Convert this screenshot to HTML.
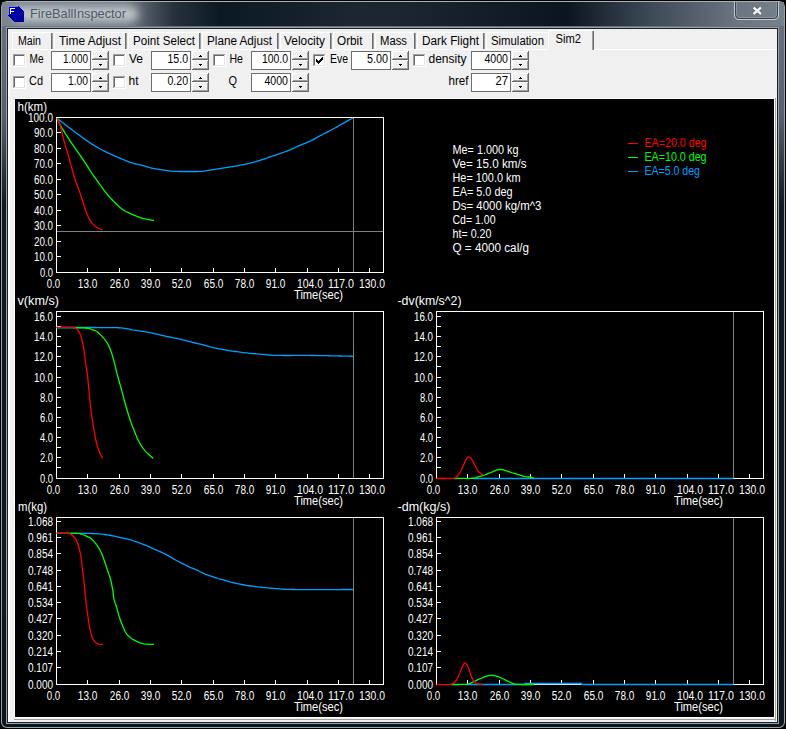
<!DOCTYPE html>
<html><head><meta charset="utf-8"><style>
html,body{margin:0;padding:0;background:#000;width:786px;height:729px;overflow:hidden}
svg{display:block}
text{font-family:"Liberation Sans",sans-serif}
</style></head><body>
<svg width="786" height="729" viewBox="0 0 786 729" shape-rendering="crispEdges">
<defs>
<linearGradient id="tb" x1="0" y1="0" x2="786" y2="0" gradientUnits="userSpaceOnUse">
<stop offset="0" stop-color="#7b8590"/>
<stop offset="0.16" stop-color="#737d88"/>
<stop offset="0.19" stop-color="#4a5560"/>
<stop offset="0.22" stop-color="#27323d"/>
<stop offset="0.28" stop-color="#0c1822"/>
<stop offset="0.45" stop-color="#1b2631"/>
<stop offset="0.52" stop-color="#1a2530"/>
<stop offset="0.72" stop-color="#0b1520"/>
<stop offset="0.82" stop-color="#3a4652"/>
<stop offset="0.94" stop-color="#6c7682"/>
<stop offset="1" stop-color="#77818c"/>
</linearGradient>
<linearGradient id="side" x1="0" y1="0" x2="0" y2="729" gradientUnits="userSpaceOnUse">
<stop offset="0" stop-color="#6c7682"/>
<stop offset="0.16" stop-color="#56606c"/>
<stop offset="0.28" stop-color="#0f1a24"/>
<stop offset="1" stop-color="#0c1620"/>
</linearGradient>
<filter id="blur6" x="-50%" y="-50%" width="200%" height="200%"><feGaussianBlur stdDeviation="5"/></filter>
<linearGradient id="closeg" x1="0" y1="0" x2="0" y2="20" gradientUnits="userSpaceOnUse">
<stop offset="0" stop-color="#7f8994"/>
<stop offset="1" stop-color="#66707b"/>
</linearGradient>
</defs>
<rect x="0" y="0" width="786" height="729" fill="#000" />
<rect x="1" y="1" width="784" height="727" rx="6" fill="#9aa3ac" shape-rendering="auto"/>
<rect x="2" y="2" width="782" height="725" rx="5" fill="url(#side)" shape-rendering="auto"/>
<rect x="2" y="2" width="782" height="24" fill="url(#tb)" />
<rect x="14" y="7" width="124" height="14" rx="6" fill="#c4cacf" filter="url(#blur6)" shape-rendering="auto"/>
<rect x="6" y="27" width="773" height="697" fill="#98a0a8" />
<rect x="7" y="28" width="771" height="695" fill="#1a2028" />
<rect x="8" y="29" width="769" height="693" fill="#f0f0f0" />
<path d="M8,6 H18 L24,12 V22 H14 L8,16 Z" fill="#0000a0"/>
<path d="M8.5,6.5 H17.5" stroke="#8080ff" stroke-width="1"/>
<path d="M8.5,6 V15" stroke="#8080ff" stroke-width="1"/>
<path d="M10.5,14 V8.5 H15 M10.5,11 H14" stroke="#ffffff" stroke-width="1" fill="none"/>
<text x="30" y="18" font-size="13" fill="#4d5a68" text-anchor="start" textLength="96" lengthAdjust="spacingAndGlyphs" >FireBallInspector</text>
<path d="M734.5,1 V15 Q734.5,19.5 739,19.5 H774 Q778.5,19.5 778.5,15 V1" fill="none" stroke="#c4cad0" stroke-width="1" shape-rendering="auto"/>
<path d="M735.5,1 V14.5 Q735.5,18.5 739.5,18.5 H773.5 Q777.5,18.5 777.5,14.5 V1" fill="none" stroke="#3a4048" stroke-width="1" shape-rendering="auto"/>
<path d="M736.5,2 V14 Q736.5,17.5 740,17.5 H773 Q776.5,17.5 776.5,14 V2" fill="none" stroke="#8a939c" stroke-width="1" shape-rendering="auto"/>
<rect x="6" y="1" width="774" height="1" fill="#a8b0b8" />
<path d="M753.5,7.5 L761,14 M761,7.5 L753.5,14" stroke="#40464c" stroke-width="3.6" shape-rendering="auto"/>
<path d="M753.5,7.5 L761,14 M761,7.5 L753.5,14" stroke="#f4f4f4" stroke-width="2.4" shape-rendering="auto"/>
<rect x="8" y="49" width="769" height="1" fill="#ffffff" />
<rect x="8" y="49" width="2" height="673" fill="#ffffff" />
<rect x="12" y="32" width="40" height="1" fill="#ffffff" />
<rect x="12" y="32" width="1" height="17" fill="#ffffff" />
<rect x="51" y="33" width="1" height="16" fill="#696969" />
<rect x="52" y="33" width="1" height="16" fill="#a0a0a0" />
<rect x="54" y="32" width="72" height="1" fill="#ffffff" />
<rect x="54" y="32" width="1" height="17" fill="#ffffff" />
<rect x="125" y="33" width="1" height="16" fill="#696969" />
<rect x="126" y="33" width="1" height="16" fill="#a0a0a0" />
<rect x="128" y="32" width="72" height="1" fill="#ffffff" />
<rect x="128" y="32" width="1" height="17" fill="#ffffff" />
<rect x="199" y="33" width="1" height="16" fill="#696969" />
<rect x="200" y="33" width="1" height="16" fill="#a0a0a0" />
<rect x="202" y="32" width="76" height="1" fill="#ffffff" />
<rect x="202" y="32" width="1" height="17" fill="#ffffff" />
<rect x="277" y="33" width="1" height="16" fill="#696969" />
<rect x="278" y="33" width="1" height="16" fill="#a0a0a0" />
<rect x="280" y="32" width="51" height="1" fill="#ffffff" />
<rect x="280" y="32" width="1" height="17" fill="#ffffff" />
<rect x="330" y="33" width="1" height="16" fill="#696969" />
<rect x="331" y="33" width="1" height="16" fill="#a0a0a0" />
<rect x="333" y="32" width="40" height="1" fill="#ffffff" />
<rect x="333" y="32" width="1" height="17" fill="#ffffff" />
<rect x="372" y="33" width="1" height="16" fill="#696969" />
<rect x="373" y="33" width="1" height="16" fill="#a0a0a0" />
<rect x="375" y="32" width="40" height="1" fill="#ffffff" />
<rect x="375" y="32" width="1" height="17" fill="#ffffff" />
<rect x="414" y="33" width="1" height="16" fill="#696969" />
<rect x="415" y="33" width="1" height="16" fill="#a0a0a0" />
<rect x="417" y="32" width="67" height="1" fill="#ffffff" />
<rect x="417" y="32" width="1" height="17" fill="#ffffff" />
<rect x="483" y="33" width="1" height="16" fill="#696969" />
<rect x="484" y="33" width="1" height="16" fill="#a0a0a0" />
<rect x="486" y="32" width="63" height="1" fill="#ffffff" />
<rect x="486" y="32" width="1" height="17" fill="#ffffff" />
<rect x="548" y="33" width="1" height="16" fill="#696969" />
<rect x="549" y="33" width="1" height="16" fill="#a0a0a0" />
<rect x="547" y="30" width="47" height="21" fill="#f0f0f0" />
<rect x="548" y="30" width="45" height="1" fill="#ffffff" />
<rect x="548" y="30" width="1" height="20" fill="#ffffff" />
<rect x="592" y="31" width="1" height="19" fill="#a0a0a0" />
<rect x="593" y="31" width="1" height="19" fill="#696969" />
<rect x="13" y="54" width="13" height="13" fill="#ffffff" />
<rect x="13" y="54" width="12" height="1" fill="#a0a0a0" />
<rect x="13" y="54" width="1" height="12" fill="#a0a0a0" />
<rect x="14" y="55" width="10" height="1" fill="#696969" />
<rect x="14" y="55" width="1" height="10" fill="#696969" />
<rect x="14" y="65" width="11" height="1" fill="#e3e3e3" />
<rect x="24" y="55" width="1" height="11" fill="#e3e3e3" />
<rect x="51" y="51" width="40" height="19" fill="#ffffff" />
<rect x="51.5" y="51.5" width="39" height="18" fill="none" stroke="#6e6e6e" stroke-width="1"/>
<rect x="92" y="51" width="17" height="9" fill="#f0f0f0" />
<rect x="92" y="51" width="16" height="1" fill="#ffffff" />
<rect x="92" y="51" width="1" height="8" fill="#ffffff" />
<rect x="92" y="59" width="17" height="1" fill="#696969" />
<rect x="108" y="51" width="1" height="9" fill="#696969" />
<rect x="93" y="58" width="15" height="1" fill="#a0a0a0" />
<rect x="107" y="52" width="1" height="7" fill="#a0a0a0" />
<rect x="100" y="55" width="1" height="1" fill="#000" />
<rect x="99" y="56" width="3" height="1" fill="#000" />
<rect x="92" y="60" width="17" height="10" fill="#f0f0f0" />
<rect x="92" y="60" width="16" height="1" fill="#ffffff" />
<rect x="92" y="60" width="1" height="9" fill="#ffffff" />
<rect x="92" y="69" width="17" height="1" fill="#696969" />
<rect x="108" y="60" width="1" height="10" fill="#696969" />
<rect x="93" y="68" width="15" height="1" fill="#a0a0a0" />
<rect x="107" y="61" width="1" height="8" fill="#a0a0a0" />
<rect x="99" y="64" width="3" height="1" fill="#000" />
<rect x="100" y="65" width="1" height="1" fill="#000" />
<rect x="13" y="76" width="13" height="13" fill="#ffffff" />
<rect x="13" y="76" width="12" height="1" fill="#a0a0a0" />
<rect x="13" y="76" width="1" height="12" fill="#a0a0a0" />
<rect x="14" y="77" width="10" height="1" fill="#696969" />
<rect x="14" y="77" width="1" height="10" fill="#696969" />
<rect x="14" y="87" width="11" height="1" fill="#e3e3e3" />
<rect x="24" y="77" width="1" height="11" fill="#e3e3e3" />
<rect x="51" y="73" width="40" height="19" fill="#ffffff" />
<rect x="51.5" y="73.5" width="39" height="18" fill="none" stroke="#6e6e6e" stroke-width="1"/>
<rect x="92" y="73" width="17" height="9" fill="#f0f0f0" />
<rect x="92" y="73" width="16" height="1" fill="#ffffff" />
<rect x="92" y="73" width="1" height="8" fill="#ffffff" />
<rect x="92" y="81" width="17" height="1" fill="#696969" />
<rect x="108" y="73" width="1" height="9" fill="#696969" />
<rect x="93" y="80" width="15" height="1" fill="#a0a0a0" />
<rect x="107" y="74" width="1" height="7" fill="#a0a0a0" />
<rect x="100" y="77" width="1" height="1" fill="#000" />
<rect x="99" y="78" width="3" height="1" fill="#000" />
<rect x="92" y="82" width="17" height="10" fill="#f0f0f0" />
<rect x="92" y="82" width="16" height="1" fill="#ffffff" />
<rect x="92" y="82" width="1" height="9" fill="#ffffff" />
<rect x="92" y="91" width="17" height="1" fill="#696969" />
<rect x="108" y="82" width="1" height="10" fill="#696969" />
<rect x="93" y="90" width="15" height="1" fill="#a0a0a0" />
<rect x="107" y="83" width="1" height="8" fill="#a0a0a0" />
<rect x="99" y="86" width="3" height="1" fill="#000" />
<rect x="100" y="87" width="1" height="1" fill="#000" />
<rect x="113" y="54" width="13" height="13" fill="#ffffff" />
<rect x="113" y="54" width="12" height="1" fill="#a0a0a0" />
<rect x="113" y="54" width="1" height="12" fill="#a0a0a0" />
<rect x="114" y="55" width="10" height="1" fill="#696969" />
<rect x="114" y="55" width="1" height="10" fill="#696969" />
<rect x="114" y="65" width="11" height="1" fill="#e3e3e3" />
<rect x="124" y="55" width="1" height="11" fill="#e3e3e3" />
<rect x="151" y="51" width="40" height="19" fill="#ffffff" />
<rect x="151.5" y="51.5" width="39" height="18" fill="none" stroke="#6e6e6e" stroke-width="1"/>
<rect x="192" y="51" width="17" height="9" fill="#f0f0f0" />
<rect x="192" y="51" width="16" height="1" fill="#ffffff" />
<rect x="192" y="51" width="1" height="8" fill="#ffffff" />
<rect x="192" y="59" width="17" height="1" fill="#696969" />
<rect x="208" y="51" width="1" height="9" fill="#696969" />
<rect x="193" y="58" width="15" height="1" fill="#a0a0a0" />
<rect x="207" y="52" width="1" height="7" fill="#a0a0a0" />
<rect x="200" y="55" width="1" height="1" fill="#000" />
<rect x="199" y="56" width="3" height="1" fill="#000" />
<rect x="192" y="60" width="17" height="10" fill="#f0f0f0" />
<rect x="192" y="60" width="16" height="1" fill="#ffffff" />
<rect x="192" y="60" width="1" height="9" fill="#ffffff" />
<rect x="192" y="69" width="17" height="1" fill="#696969" />
<rect x="208" y="60" width="1" height="10" fill="#696969" />
<rect x="193" y="68" width="15" height="1" fill="#a0a0a0" />
<rect x="207" y="61" width="1" height="8" fill="#a0a0a0" />
<rect x="199" y="64" width="3" height="1" fill="#000" />
<rect x="200" y="65" width="1" height="1" fill="#000" />
<rect x="113" y="76" width="13" height="13" fill="#ffffff" />
<rect x="113" y="76" width="12" height="1" fill="#a0a0a0" />
<rect x="113" y="76" width="1" height="12" fill="#a0a0a0" />
<rect x="114" y="77" width="10" height="1" fill="#696969" />
<rect x="114" y="77" width="1" height="10" fill="#696969" />
<rect x="114" y="87" width="11" height="1" fill="#e3e3e3" />
<rect x="124" y="77" width="1" height="11" fill="#e3e3e3" />
<rect x="151" y="73" width="40" height="19" fill="#ffffff" />
<rect x="151.5" y="73.5" width="39" height="18" fill="none" stroke="#6e6e6e" stroke-width="1"/>
<rect x="192" y="73" width="17" height="9" fill="#f0f0f0" />
<rect x="192" y="73" width="16" height="1" fill="#ffffff" />
<rect x="192" y="73" width="1" height="8" fill="#ffffff" />
<rect x="192" y="81" width="17" height="1" fill="#696969" />
<rect x="208" y="73" width="1" height="9" fill="#696969" />
<rect x="193" y="80" width="15" height="1" fill="#a0a0a0" />
<rect x="207" y="74" width="1" height="7" fill="#a0a0a0" />
<rect x="200" y="77" width="1" height="1" fill="#000" />
<rect x="199" y="78" width="3" height="1" fill="#000" />
<rect x="192" y="82" width="17" height="10" fill="#f0f0f0" />
<rect x="192" y="82" width="16" height="1" fill="#ffffff" />
<rect x="192" y="82" width="1" height="9" fill="#ffffff" />
<rect x="192" y="91" width="17" height="1" fill="#696969" />
<rect x="208" y="82" width="1" height="10" fill="#696969" />
<rect x="193" y="90" width="15" height="1" fill="#a0a0a0" />
<rect x="207" y="83" width="1" height="8" fill="#a0a0a0" />
<rect x="199" y="86" width="3" height="1" fill="#000" />
<rect x="200" y="87" width="1" height="1" fill="#000" />
<rect x="213" y="54" width="13" height="13" fill="#ffffff" />
<rect x="213" y="54" width="12" height="1" fill="#a0a0a0" />
<rect x="213" y="54" width="1" height="12" fill="#a0a0a0" />
<rect x="214" y="55" width="10" height="1" fill="#696969" />
<rect x="214" y="55" width="1" height="10" fill="#696969" />
<rect x="214" y="65" width="11" height="1" fill="#e3e3e3" />
<rect x="224" y="55" width="1" height="11" fill="#e3e3e3" />
<rect x="251" y="51" width="40" height="19" fill="#ffffff" />
<rect x="251.5" y="51.5" width="39" height="18" fill="none" stroke="#6e6e6e" stroke-width="1"/>
<rect x="292" y="51" width="17" height="9" fill="#f0f0f0" />
<rect x="292" y="51" width="16" height="1" fill="#ffffff" />
<rect x="292" y="51" width="1" height="8" fill="#ffffff" />
<rect x="292" y="59" width="17" height="1" fill="#696969" />
<rect x="308" y="51" width="1" height="9" fill="#696969" />
<rect x="293" y="58" width="15" height="1" fill="#a0a0a0" />
<rect x="307" y="52" width="1" height="7" fill="#a0a0a0" />
<rect x="300" y="55" width="1" height="1" fill="#000" />
<rect x="299" y="56" width="3" height="1" fill="#000" />
<rect x="292" y="60" width="17" height="10" fill="#f0f0f0" />
<rect x="292" y="60" width="16" height="1" fill="#ffffff" />
<rect x="292" y="60" width="1" height="9" fill="#ffffff" />
<rect x="292" y="69" width="17" height="1" fill="#696969" />
<rect x="308" y="60" width="1" height="10" fill="#696969" />
<rect x="293" y="68" width="15" height="1" fill="#a0a0a0" />
<rect x="307" y="61" width="1" height="8" fill="#a0a0a0" />
<rect x="299" y="64" width="3" height="1" fill="#000" />
<rect x="300" y="65" width="1" height="1" fill="#000" />
<rect x="251" y="73" width="40" height="19" fill="#ffffff" />
<rect x="251.5" y="73.5" width="39" height="18" fill="none" stroke="#6e6e6e" stroke-width="1"/>
<rect x="292" y="73" width="17" height="9" fill="#f0f0f0" />
<rect x="292" y="73" width="16" height="1" fill="#ffffff" />
<rect x="292" y="73" width="1" height="8" fill="#ffffff" />
<rect x="292" y="81" width="17" height="1" fill="#696969" />
<rect x="308" y="73" width="1" height="9" fill="#696969" />
<rect x="293" y="80" width="15" height="1" fill="#a0a0a0" />
<rect x="307" y="74" width="1" height="7" fill="#a0a0a0" />
<rect x="300" y="77" width="1" height="1" fill="#000" />
<rect x="299" y="78" width="3" height="1" fill="#000" />
<rect x="292" y="82" width="17" height="10" fill="#f0f0f0" />
<rect x="292" y="82" width="16" height="1" fill="#ffffff" />
<rect x="292" y="82" width="1" height="9" fill="#ffffff" />
<rect x="292" y="91" width="17" height="1" fill="#696969" />
<rect x="308" y="82" width="1" height="10" fill="#696969" />
<rect x="293" y="90" width="15" height="1" fill="#a0a0a0" />
<rect x="307" y="83" width="1" height="8" fill="#a0a0a0" />
<rect x="299" y="86" width="3" height="1" fill="#000" />
<rect x="300" y="87" width="1" height="1" fill="#000" />
<rect x="313" y="54" width="13" height="13" fill="#ffffff" />
<rect x="313" y="54" width="12" height="1" fill="#a0a0a0" />
<rect x="313" y="54" width="1" height="12" fill="#a0a0a0" />
<rect x="314" y="55" width="10" height="1" fill="#696969" />
<rect x="314" y="55" width="1" height="10" fill="#696969" />
<rect x="314" y="65" width="11" height="1" fill="#e3e3e3" />
<rect x="324" y="55" width="1" height="11" fill="#e3e3e3" />
<rect x="322" y="57" width="1" height="1" fill="#000" />
<rect x="321" y="58" width="1" height="1" fill="#000" />
<rect x="322" y="58" width="1" height="1" fill="#000" />
<rect x="316" y="59" width="1" height="1" fill="#000" />
<rect x="320" y="59" width="1" height="1" fill="#000" />
<rect x="321" y="59" width="1" height="1" fill="#000" />
<rect x="322" y="59" width="1" height="1" fill="#000" />
<rect x="316" y="60" width="1" height="1" fill="#000" />
<rect x="317" y="60" width="1" height="1" fill="#000" />
<rect x="319" y="60" width="1" height="1" fill="#000" />
<rect x="320" y="60" width="1" height="1" fill="#000" />
<rect x="321" y="60" width="1" height="1" fill="#000" />
<rect x="316" y="61" width="1" height="1" fill="#000" />
<rect x="317" y="61" width="1" height="1" fill="#000" />
<rect x="318" y="61" width="1" height="1" fill="#000" />
<rect x="319" y="61" width="1" height="1" fill="#000" />
<rect x="320" y="61" width="1" height="1" fill="#000" />
<rect x="317" y="62" width="1" height="1" fill="#000" />
<rect x="318" y="62" width="1" height="1" fill="#000" />
<rect x="319" y="62" width="1" height="1" fill="#000" />
<rect x="318" y="63" width="1" height="1" fill="#000" />
<rect x="351" y="51" width="40" height="19" fill="#ffffff" />
<rect x="351.5" y="51.5" width="39" height="18" fill="none" stroke="#6e6e6e" stroke-width="1"/>
<rect x="392" y="51" width="17" height="9" fill="#f0f0f0" />
<rect x="392" y="51" width="16" height="1" fill="#ffffff" />
<rect x="392" y="51" width="1" height="8" fill="#ffffff" />
<rect x="392" y="59" width="17" height="1" fill="#696969" />
<rect x="408" y="51" width="1" height="9" fill="#696969" />
<rect x="393" y="58" width="15" height="1" fill="#a0a0a0" />
<rect x="407" y="52" width="1" height="7" fill="#a0a0a0" />
<rect x="400" y="55" width="1" height="1" fill="#000" />
<rect x="399" y="56" width="3" height="1" fill="#000" />
<rect x="392" y="60" width="17" height="10" fill="#f0f0f0" />
<rect x="392" y="60" width="16" height="1" fill="#ffffff" />
<rect x="392" y="60" width="1" height="9" fill="#ffffff" />
<rect x="392" y="69" width="17" height="1" fill="#696969" />
<rect x="408" y="60" width="1" height="10" fill="#696969" />
<rect x="393" y="68" width="15" height="1" fill="#a0a0a0" />
<rect x="407" y="61" width="1" height="8" fill="#a0a0a0" />
<rect x="399" y="64" width="3" height="1" fill="#000" />
<rect x="400" y="65" width="1" height="1" fill="#000" />
<rect x="413" y="54" width="13" height="13" fill="#ffffff" />
<rect x="413" y="54" width="12" height="1" fill="#a0a0a0" />
<rect x="413" y="54" width="1" height="12" fill="#a0a0a0" />
<rect x="414" y="55" width="10" height="1" fill="#696969" />
<rect x="414" y="55" width="1" height="10" fill="#696969" />
<rect x="414" y="65" width="11" height="1" fill="#e3e3e3" />
<rect x="424" y="55" width="1" height="11" fill="#e3e3e3" />
<rect x="471" y="51" width="40" height="19" fill="#ffffff" />
<rect x="471.5" y="51.5" width="39" height="18" fill="none" stroke="#6e6e6e" stroke-width="1"/>
<rect x="512" y="51" width="17" height="9" fill="#f0f0f0" />
<rect x="512" y="51" width="16" height="1" fill="#ffffff" />
<rect x="512" y="51" width="1" height="8" fill="#ffffff" />
<rect x="512" y="59" width="17" height="1" fill="#696969" />
<rect x="528" y="51" width="1" height="9" fill="#696969" />
<rect x="513" y="58" width="15" height="1" fill="#a0a0a0" />
<rect x="527" y="52" width="1" height="7" fill="#a0a0a0" />
<rect x="520" y="55" width="1" height="1" fill="#000" />
<rect x="519" y="56" width="3" height="1" fill="#000" />
<rect x="512" y="60" width="17" height="10" fill="#f0f0f0" />
<rect x="512" y="60" width="16" height="1" fill="#ffffff" />
<rect x="512" y="60" width="1" height="9" fill="#ffffff" />
<rect x="512" y="69" width="17" height="1" fill="#696969" />
<rect x="528" y="60" width="1" height="10" fill="#696969" />
<rect x="513" y="68" width="15" height="1" fill="#a0a0a0" />
<rect x="527" y="61" width="1" height="8" fill="#a0a0a0" />
<rect x="519" y="64" width="3" height="1" fill="#000" />
<rect x="520" y="65" width="1" height="1" fill="#000" />
<rect x="471" y="73" width="40" height="19" fill="#ffffff" />
<rect x="471.5" y="73.5" width="39" height="18" fill="none" stroke="#6e6e6e" stroke-width="1"/>
<rect x="512" y="73" width="17" height="9" fill="#f0f0f0" />
<rect x="512" y="73" width="16" height="1" fill="#ffffff" />
<rect x="512" y="73" width="1" height="8" fill="#ffffff" />
<rect x="512" y="81" width="17" height="1" fill="#696969" />
<rect x="528" y="73" width="1" height="9" fill="#696969" />
<rect x="513" y="80" width="15" height="1" fill="#a0a0a0" />
<rect x="527" y="74" width="1" height="7" fill="#a0a0a0" />
<rect x="520" y="77" width="1" height="1" fill="#000" />
<rect x="519" y="78" width="3" height="1" fill="#000" />
<rect x="512" y="82" width="17" height="10" fill="#f0f0f0" />
<rect x="512" y="82" width="16" height="1" fill="#ffffff" />
<rect x="512" y="82" width="1" height="9" fill="#ffffff" />
<rect x="512" y="91" width="17" height="1" fill="#696969" />
<rect x="528" y="82" width="1" height="10" fill="#696969" />
<rect x="513" y="90" width="15" height="1" fill="#a0a0a0" />
<rect x="527" y="83" width="1" height="8" fill="#a0a0a0" />
<rect x="519" y="86" width="3" height="1" fill="#000" />
<rect x="520" y="87" width="1" height="1" fill="#000" />
<rect x="14" y="98" width="761" height="620" fill="#ffffff" />
<rect x="775" y="98" width="1" height="623" fill="#a0a0a0" />
<rect x="14" y="719" width="762" height="1" fill="#a0a0a0" />
<rect x="15" y="99" width="759" height="618" fill="#000000" />
<rect x="353" y="117" width="1" height="155" fill="#808080"/>
<rect x="56" y="231" width="327" height="1" fill="#808080" />
<rect x="56" y="117" width="328" height="1" fill="#ffffff" />
<rect x="383" y="117" width="1" height="156" fill="#ffffff" />
<rect x="56" y="117" width="1" height="156" fill="#ffffff" />
<rect x="56" y="272" width="328" height="1" fill="#ffffff" />
<rect x="57" y="256" width="4" height="1" fill="#ffffff" />
<rect x="57" y="241" width="4" height="1" fill="#ffffff" />
<rect x="57" y="225" width="4" height="1" fill="#ffffff" />
<rect x="57" y="210" width="4" height="1" fill="#ffffff" />
<rect x="57" y="194" width="4" height="1" fill="#ffffff" />
<rect x="57" y="179" width="4" height="1" fill="#ffffff" />
<rect x="57" y="163" width="4" height="1" fill="#ffffff" />
<rect x="57" y="148" width="4" height="1" fill="#ffffff" />
<rect x="57" y="132" width="4" height="1" fill="#ffffff" />
<rect x="87" y="268" width="1" height="4" fill="#ffffff" />
<rect x="119" y="268" width="1" height="4" fill="#ffffff" />
<rect x="150" y="268" width="1" height="4" fill="#ffffff" />
<rect x="181" y="268" width="1" height="4" fill="#ffffff" />
<rect x="213" y="268" width="1" height="4" fill="#ffffff" />
<rect x="244" y="268" width="1" height="4" fill="#ffffff" />
<rect x="275" y="268" width="1" height="4" fill="#ffffff" />
<rect x="307" y="268" width="1" height="4" fill="#ffffff" />
<rect x="338" y="268" width="1" height="4" fill="#ffffff" />
<rect x="369" y="268" width="1" height="4" fill="#ffffff" />
<rect x="353" y="311" width="1" height="167" fill="#808080"/>
<rect x="56" y="311" width="328" height="1" fill="#ffffff" />
<rect x="383" y="311" width="1" height="168" fill="#ffffff" />
<rect x="56" y="311" width="1" height="168" fill="#ffffff" />
<rect x="56" y="478" width="328" height="1" fill="#ffffff" />
<rect x="57" y="467" width="4" height="1" fill="#ffffff" />
<rect x="57" y="457" width="4" height="1" fill="#ffffff" />
<rect x="57" y="447" width="4" height="1" fill="#ffffff" />
<rect x="57" y="437" width="4" height="1" fill="#ffffff" />
<rect x="57" y="427" width="4" height="1" fill="#ffffff" />
<rect x="57" y="417" width="4" height="1" fill="#ffffff" />
<rect x="57" y="407" width="4" height="1" fill="#ffffff" />
<rect x="57" y="397" width="4" height="1" fill="#ffffff" />
<rect x="57" y="387" width="4" height="1" fill="#ffffff" />
<rect x="57" y="377" width="4" height="1" fill="#ffffff" />
<rect x="57" y="366" width="4" height="1" fill="#ffffff" />
<rect x="57" y="356" width="4" height="1" fill="#ffffff" />
<rect x="57" y="346" width="4" height="1" fill="#ffffff" />
<rect x="57" y="336" width="4" height="1" fill="#ffffff" />
<rect x="57" y="326" width="4" height="1" fill="#ffffff" />
<rect x="57" y="316" width="4" height="1" fill="#ffffff" />
<rect x="87" y="474" width="1" height="4" fill="#ffffff" />
<rect x="119" y="474" width="1" height="4" fill="#ffffff" />
<rect x="150" y="474" width="1" height="4" fill="#ffffff" />
<rect x="181" y="474" width="1" height="4" fill="#ffffff" />
<rect x="213" y="474" width="1" height="4" fill="#ffffff" />
<rect x="244" y="474" width="1" height="4" fill="#ffffff" />
<rect x="275" y="474" width="1" height="4" fill="#ffffff" />
<rect x="307" y="474" width="1" height="4" fill="#ffffff" />
<rect x="338" y="474" width="1" height="4" fill="#ffffff" />
<rect x="369" y="474" width="1" height="4" fill="#ffffff" />
<rect x="733" y="311" width="1" height="167" fill="#808080"/>
<rect x="436" y="311" width="328" height="1" fill="#ffffff" />
<rect x="763" y="311" width="1" height="168" fill="#ffffff" />
<rect x="436" y="311" width="1" height="168" fill="#ffffff" />
<rect x="436" y="478" width="328" height="1" fill="#ffffff" />
<rect x="437" y="467" width="4" height="1" fill="#ffffff" />
<rect x="437" y="457" width="4" height="1" fill="#ffffff" />
<rect x="437" y="447" width="4" height="1" fill="#ffffff" />
<rect x="437" y="437" width="4" height="1" fill="#ffffff" />
<rect x="437" y="427" width="4" height="1" fill="#ffffff" />
<rect x="437" y="417" width="4" height="1" fill="#ffffff" />
<rect x="437" y="407" width="4" height="1" fill="#ffffff" />
<rect x="437" y="397" width="4" height="1" fill="#ffffff" />
<rect x="437" y="387" width="4" height="1" fill="#ffffff" />
<rect x="437" y="377" width="4" height="1" fill="#ffffff" />
<rect x="437" y="366" width="4" height="1" fill="#ffffff" />
<rect x="437" y="356" width="4" height="1" fill="#ffffff" />
<rect x="437" y="346" width="4" height="1" fill="#ffffff" />
<rect x="437" y="336" width="4" height="1" fill="#ffffff" />
<rect x="437" y="326" width="4" height="1" fill="#ffffff" />
<rect x="437" y="316" width="4" height="1" fill="#ffffff" />
<rect x="467" y="474" width="1" height="4" fill="#ffffff" />
<rect x="499" y="474" width="1" height="4" fill="#ffffff" />
<rect x="530" y="474" width="1" height="4" fill="#ffffff" />
<rect x="561" y="474" width="1" height="4" fill="#ffffff" />
<rect x="593" y="474" width="1" height="4" fill="#ffffff" />
<rect x="624" y="474" width="1" height="4" fill="#ffffff" />
<rect x="655" y="474" width="1" height="4" fill="#ffffff" />
<rect x="687" y="474" width="1" height="4" fill="#ffffff" />
<rect x="718" y="474" width="1" height="4" fill="#ffffff" />
<rect x="749" y="474" width="1" height="4" fill="#ffffff" />
<rect x="353" y="517" width="1" height="167" fill="#808080"/>
<rect x="56" y="517" width="328" height="1" fill="#ffffff" />
<rect x="383" y="517" width="1" height="168" fill="#ffffff" />
<rect x="56" y="517" width="1" height="168" fill="#ffffff" />
<rect x="56" y="684" width="328" height="1" fill="#ffffff" />
<rect x="57" y="667" width="4" height="1" fill="#ffffff" />
<rect x="57" y="651" width="4" height="1" fill="#ffffff" />
<rect x="57" y="635" width="4" height="1" fill="#ffffff" />
<rect x="57" y="618" width="4" height="1" fill="#ffffff" />
<rect x="57" y="602" width="4" height="1" fill="#ffffff" />
<rect x="57" y="586" width="4" height="1" fill="#ffffff" />
<rect x="57" y="570" width="4" height="1" fill="#ffffff" />
<rect x="57" y="553" width="4" height="1" fill="#ffffff" />
<rect x="57" y="537" width="4" height="1" fill="#ffffff" />
<rect x="57" y="521" width="4" height="1" fill="#ffffff" />
<rect x="87" y="680" width="1" height="4" fill="#ffffff" />
<rect x="119" y="680" width="1" height="4" fill="#ffffff" />
<rect x="150" y="680" width="1" height="4" fill="#ffffff" />
<rect x="181" y="680" width="1" height="4" fill="#ffffff" />
<rect x="213" y="680" width="1" height="4" fill="#ffffff" />
<rect x="244" y="680" width="1" height="4" fill="#ffffff" />
<rect x="275" y="680" width="1" height="4" fill="#ffffff" />
<rect x="307" y="680" width="1" height="4" fill="#ffffff" />
<rect x="338" y="680" width="1" height="4" fill="#ffffff" />
<rect x="369" y="680" width="1" height="4" fill="#ffffff" />
<rect x="733" y="517" width="1" height="167" fill="#808080"/>
<rect x="436" y="517" width="328" height="1" fill="#ffffff" />
<rect x="763" y="517" width="1" height="168" fill="#ffffff" />
<rect x="436" y="517" width="1" height="168" fill="#ffffff" />
<rect x="436" y="684" width="328" height="1" fill="#ffffff" />
<rect x="437" y="667" width="4" height="1" fill="#ffffff" />
<rect x="437" y="651" width="4" height="1" fill="#ffffff" />
<rect x="437" y="635" width="4" height="1" fill="#ffffff" />
<rect x="437" y="618" width="4" height="1" fill="#ffffff" />
<rect x="437" y="602" width="4" height="1" fill="#ffffff" />
<rect x="437" y="586" width="4" height="1" fill="#ffffff" />
<rect x="437" y="570" width="4" height="1" fill="#ffffff" />
<rect x="437" y="553" width="4" height="1" fill="#ffffff" />
<rect x="437" y="537" width="4" height="1" fill="#ffffff" />
<rect x="437" y="521" width="4" height="1" fill="#ffffff" />
<rect x="467" y="680" width="1" height="4" fill="#ffffff" />
<rect x="499" y="680" width="1" height="4" fill="#ffffff" />
<rect x="530" y="680" width="1" height="4" fill="#ffffff" />
<rect x="561" y="680" width="1" height="4" fill="#ffffff" />
<rect x="593" y="680" width="1" height="4" fill="#ffffff" />
<rect x="624" y="680" width="1" height="4" fill="#ffffff" />
<rect x="655" y="680" width="1" height="4" fill="#ffffff" />
<rect x="687" y="680" width="1" height="4" fill="#ffffff" />
<rect x="718" y="680" width="1" height="4" fill="#ffffff" />
<rect x="749" y="680" width="1" height="4" fill="#ffffff" />
<polyline points="56.90,118.20 57.62,118.75 58.54,119.46 59.63,120.31 60.86,121.25 62.18,122.27 63.56,123.34 64.96,124.42 66.36,125.48 67.70,126.50 68.89,127.40 70.12,128.33 71.37,129.28 72.64,130.24 73.93,131.21 75.22,132.19 76.52,133.16 77.82,134.12 79.12,135.07 80.40,136.00 81.68,136.92 82.96,137.85 84.24,138.77 85.52,139.69 86.80,140.61 88.08,141.51 89.36,142.39 90.64,143.25 91.92,144.09 93.20,144.90 94.62,145.77 96.03,146.61 97.44,147.42 98.85,148.21 100.26,148.98 101.67,149.73 103.08,150.47 104.49,151.19 105.90,151.90 107.31,152.59 108.72,153.27 110.13,153.92 111.54,154.56 112.96,155.18 114.37,155.79 115.78,156.40 117.19,157.00 118.60,157.60 120.01,158.20 121.42,158.81 122.83,159.41 124.24,160.01 125.65,160.60 127.06,161.16 128.47,161.71 129.88,162.22 131.30,162.70 132.93,163.20 134.62,163.66 136.33,164.09 138.04,164.49 139.70,164.86 141.28,165.22 142.76,165.57 144.10,165.90 145.83,166.39 147.16,166.82 148.36,167.21 149.69,167.60 151.40,168.00 152.74,168.27 154.24,168.55 155.86,168.83 157.54,169.11 159.25,169.38 160.92,169.64 162.52,169.88 164.00,170.10 165.74,170.36 167.31,170.60 168.80,170.82 170.31,171.01 171.94,171.17 173.80,171.30 175.19,171.37 176.67,171.42 178.22,171.46 179.83,171.48 181.47,171.49 183.13,171.50 184.79,171.50 186.42,171.50 188.00,171.50 189.57,171.50 191.14,171.51 192.73,171.51 194.30,171.52 195.87,171.51 197.41,171.49 198.92,171.45 200.38,171.39 201.80,171.30 203.57,171.14 205.31,170.93 207.00,170.69 208.63,170.42 210.18,170.16 211.64,169.91 213.00,169.70 214.88,169.42 216.32,169.19 217.86,168.94 220.00,168.60 221.25,168.41 222.64,168.20 224.15,167.97 225.74,167.73 227.39,167.48 229.07,167.22 230.75,166.95 232.41,166.68 234.00,166.40 235.57,166.12 237.15,165.83 238.74,165.53 240.33,165.22 241.91,164.91 243.48,164.59 245.02,164.27 246.53,163.94 248.00,163.60 249.54,163.24 250.95,162.89 252.29,162.55 253.62,162.20 255.00,161.82 256.48,161.38 258.13,160.88 260.00,160.30 261.21,159.91 262.52,159.49 263.94,159.02 265.42,158.52 266.96,158.00 268.54,157.47 270.12,156.92 271.71,156.38 273.27,155.84 274.78,155.32 276.23,154.82 277.60,154.34 278.86,153.90 280.00,153.50 281.95,152.82 283.59,152.24 284.99,151.74 286.24,151.28 287.43,150.83 288.66,150.34 290.00,149.80 291.43,149.20 292.86,148.56 294.29,147.91 295.71,147.24 297.14,146.58 298.57,145.93 300.00,145.30 301.43,144.70 302.86,144.14 304.29,143.58 305.71,143.03 307.14,142.45 308.57,141.85 310.00,141.20 311.39,140.51 312.74,139.81 314.08,139.08 315.43,138.32 316.85,137.52 318.36,136.68 320.00,135.80 321.24,135.15 322.54,134.47 323.91,133.77 325.31,133.05 326.75,132.31 328.21,131.55 329.67,130.79 331.14,130.03 332.58,129.26 334.00,128.50 335.44,127.71 336.95,126.87 338.49,126.01 340.04,125.13 341.57,124.26 343.06,123.41 344.47,122.60 345.78,121.85 346.97,121.18 348.00,120.60 350.49,119.24 351.97,118.48 352.90,118.00" fill="none" stroke="#00a0ff" stroke-width="1.3" stroke-linejoin="round" shape-rendering="auto"/>
<polyline points="56.90,118.20 57.37,119.15 58.00,120.46 58.76,122.01 59.60,123.71 60.49,125.44 61.40,127.10 62.20,128.50 63.07,129.94 63.97,131.42 64.90,132.91 65.84,134.40 66.78,135.87 67.70,137.30 68.61,138.70 69.52,140.08 70.44,141.45 71.36,142.81 72.28,144.15 73.19,145.48 74.10,146.80 75.00,148.10 75.90,149.37 76.80,150.62 77.70,151.87 78.60,153.12 79.50,154.40 80.40,155.70 81.32,157.04 82.24,158.41 83.17,159.80 84.10,161.20 85.02,162.59 85.92,163.96 86.80,165.30 87.65,166.62 88.48,167.92 89.29,169.22 90.09,170.49 90.89,171.75 91.69,172.99 92.50,174.20 93.41,175.53 94.28,176.75 95.15,177.95 96.06,179.19 97.06,180.55 98.20,182.10 98.96,183.15 99.78,184.29 100.63,185.50 101.53,186.76 102.45,188.05 103.39,189.35 104.33,190.63 105.27,191.88 106.20,193.08 107.10,194.20 108.22,195.53 109.36,196.83 110.49,198.09 111.63,199.31 112.76,200.48 113.87,201.60 114.95,202.68 116.00,203.70 117.33,204.97 118.58,206.14 119.80,207.22 121.02,208.23 122.27,209.18 123.60,210.10 124.99,210.96 126.42,211.74 127.89,212.46 129.39,213.15 130.93,213.82 132.50,214.50 133.88,215.09 135.29,215.68 136.73,216.25 138.19,216.81 139.67,217.35 141.18,217.85 142.70,218.30 144.35,218.72 146.15,219.11 148.02,219.47 149.83,219.80 151.49,220.08 152.88,220.32 153.90,220.50" fill="none" stroke="#00ff00" stroke-width="1.3" stroke-linejoin="round" shape-rendering="auto"/>
<polyline points="56.90,118.20 57.33,119.02 57.92,120.10 58.62,121.47 59.37,123.16 60.10,125.20 60.46,126.40 60.82,127.75 61.20,129.23 61.58,130.80 61.96,132.44 62.35,134.10 62.74,135.76 63.13,137.38 63.52,138.94 63.90,140.40 64.38,142.11 64.85,143.74 65.33,145.32 65.80,146.88 66.28,148.42 66.75,149.97 67.22,151.56 67.70,153.20 68.12,154.71 68.54,156.25 68.97,157.81 69.39,159.39 69.81,160.98 70.23,162.56 70.66,164.13 71.08,165.68 71.50,167.20 71.92,168.70 72.34,170.21 72.77,171.71 73.19,173.20 73.61,174.67 74.03,176.11 74.46,177.52 74.88,178.88 75.30,180.20 75.84,181.79 76.39,183.28 76.93,184.70 77.47,186.09 78.01,187.48 78.56,188.90 79.10,190.40 79.57,191.77 80.05,193.16 80.52,194.58 81.00,196.02 81.47,197.46 81.95,198.91 82.42,200.36 82.90,201.80 83.38,203.26 83.85,204.76 84.33,206.28 84.80,207.79 85.28,209.27 85.75,210.70 86.23,212.05 86.70,213.30 87.44,215.10 88.16,216.71 88.89,218.18 89.66,219.56 90.50,220.90 91.41,222.20 92.36,223.43 93.36,224.58 94.44,225.64 95.60,226.60 96.99,227.48 98.60,228.29 100.21,229.00 101.62,229.57 102.60,230.00" fill="none" stroke="#ff0000" stroke-width="1.3" stroke-linejoin="round" shape-rendering="auto"/>
<polyline points="56.50,327.50 57.31,327.50 58.22,327.50 59.24,327.50 60.35,327.50 61.55,327.50 62.84,327.50 64.20,327.50 65.64,327.50 67.14,327.50 68.70,327.50 70.32,327.50 71.98,327.50 73.69,327.50 75.43,327.50 77.20,327.50 78.99,327.50 80.80,327.51 82.62,327.51 84.45,327.51 86.28,327.51 88.10,327.51 89.91,327.51 91.70,327.52 93.46,327.52 95.20,327.52 96.89,327.53 98.55,327.53 100.15,327.54 101.70,327.54 103.19,327.55 104.61,327.55 105.96,327.56 107.23,327.57 108.41,327.58 109.50,327.59 110.50,327.60 113.84,327.65 116.39,327.69 118.31,327.75 119.73,327.81 120.81,327.88 121.68,327.96 122.49,328.06 123.38,328.17 124.50,328.30 126.32,328.54 127.97,328.84 129.49,329.18 130.90,329.51 132.26,329.83 133.60,330.10 135.50,330.43 137.23,330.70 138.90,330.95 140.60,331.20 142.38,331.45 144.19,331.70 145.95,331.95 147.60,332.20 149.47,332.53 151.18,332.86 153.20,333.30 154.70,333.65 156.36,334.04 158.11,334.47 159.88,334.90 161.60,335.30 163.28,335.67 164.96,336.04 166.64,336.40 168.32,336.75 170.00,337.10 171.68,337.44 173.36,337.77 175.04,338.10 176.72,338.44 178.40,338.80 180.08,339.19 181.76,339.61 183.44,340.04 185.12,340.47 186.80,340.90 188.46,341.32 190.09,341.73 191.74,342.15 193.43,342.57 195.20,343.00 196.79,343.38 198.49,343.77 200.23,344.16 201.94,344.56 203.55,344.94 205.00,345.30 206.74,345.80 208.15,346.27 209.56,346.73 211.30,347.20 212.70,347.53 214.20,347.86 215.81,348.19 217.50,348.52 219.26,348.86 221.10,349.20 222.52,349.46 223.97,349.72 225.47,349.98 227.01,350.25 228.60,350.52 230.24,350.78 231.94,351.04 233.70,351.30 235.19,351.51 236.77,351.72 238.43,351.94 240.12,352.16 241.84,352.38 243.54,352.58 245.22,352.78 246.84,352.97 248.37,353.15 249.80,353.30 251.62,353.48 253.23,353.63 254.72,353.75 256.16,353.85 257.64,353.95 259.22,354.07 261.00,354.20 262.27,354.31 263.46,354.44 264.63,354.57 265.82,354.71 267.08,354.85 268.48,354.98 270.05,355.11 271.86,355.23 273.96,355.32 276.40,355.40 277.53,355.42 278.72,355.44 279.98,355.46 281.30,355.47 282.66,355.48 284.08,355.49 285.55,355.49 287.06,355.49 288.60,355.49 290.18,355.48 291.79,355.48 293.42,355.47 295.07,355.47 296.74,355.46 298.43,355.46 300.12,355.46 301.82,355.45 303.52,355.45 305.22,355.45 306.90,355.46 308.58,355.46 310.24,355.47 311.88,355.48 313.50,355.50 315.01,355.52 316.59,355.54 318.21,355.57 319.88,355.59 321.59,355.62 323.33,355.65 325.10,355.69 326.88,355.72 328.67,355.76 330.46,355.79 332.24,355.83 334.02,355.87 335.77,355.91 337.49,355.94 339.18,355.98 340.83,356.02 342.43,356.05 343.97,356.09 345.45,356.12 346.86,356.16 348.19,356.19 349.43,356.21 350.58,356.24 351.63,356.26 352.57,356.28 353.40,356.30" fill="none" stroke="#00a0ff" stroke-width="1.3" stroke-linejoin="round" shape-rendering="auto"/>
<polyline points="56.50,327.50 57.38,327.51 58.46,327.53 59.72,327.54 61.15,327.56 62.70,327.58 64.37,327.59 66.13,327.61 67.95,327.63 69.82,327.66 71.70,327.68 73.58,327.71 75.43,327.74 77.23,327.77 78.96,327.80 80.60,327.83 82.11,327.87 83.48,327.91 84.68,327.95 85.70,328.00 89.29,328.34 90.24,328.77 91.20,329.30 93.03,329.86 94.87,330.53 96.70,331.50 98.10,332.54 99.52,333.79 100.90,335.15 102.20,336.50 103.40,337.82 104.54,339.16 105.60,340.54 106.60,342.00 107.50,343.48 108.32,344.97 109.10,346.61 109.90,348.50 110.44,349.89 110.98,351.35 111.52,352.91 112.06,354.58 112.62,356.40 113.20,358.40 113.56,359.71 113.93,361.13 114.30,362.62 114.68,364.18 115.07,365.77 115.46,367.38 115.84,368.99 116.23,370.58 116.62,372.12 117.00,373.60 117.42,375.16 117.83,376.67 118.24,378.14 118.65,379.59 119.06,381.04 119.48,382.50 119.91,384.01 120.35,385.57 120.80,387.20 121.18,388.60 121.58,390.06 121.98,391.55 122.38,393.08 122.80,394.63 123.22,396.19 123.63,397.75 124.05,399.30 124.47,400.83 124.89,402.34 125.30,403.80 125.75,405.38 126.20,406.97 126.65,408.54 127.10,410.10 127.55,411.64 128.00,413.16 128.45,414.65 128.90,416.10 129.35,417.52 129.80,418.90 130.36,420.56 130.92,422.15 131.48,423.69 132.04,425.18 132.61,426.64 133.17,428.07 133.73,429.49 134.30,430.90 134.94,432.50 135.57,434.07 136.19,435.62 136.83,437.14 137.48,438.62 138.17,440.08 138.90,441.50 139.66,442.89 140.45,444.25 141.25,445.57 142.09,446.87 142.98,448.14 143.91,449.38 144.90,450.60 146.04,451.85 147.35,453.15 148.73,454.44 150.10,455.67 151.37,456.78 152.43,457.71 153.20,458.40" fill="none" stroke="#00ff00" stroke-width="1.3" stroke-linejoin="round" shape-rendering="auto"/>
<polyline points="56.50,327.50 57.51,327.49 58.88,327.47 60.52,327.44 62.34,327.41 64.27,327.39 66.23,327.37 68.12,327.37 69.87,327.38 71.39,327.43 72.60,327.50 74.98,327.85 76.06,328.40 77.00,329.30 78.19,330.63 79.25,332.31 80.20,334.30 80.71,335.65 81.18,337.14 81.60,338.72 82.01,340.35 82.40,342.00 82.77,343.60 83.12,345.19 83.45,346.85 83.77,348.66 84.10,350.70 84.30,352.15 84.50,353.74 84.70,355.42 84.90,357.16 85.10,358.91 85.30,360.65 85.50,362.32 85.70,363.90 85.94,365.59 86.20,367.20 86.45,368.77 86.71,370.30 86.96,371.82 87.19,373.35 87.40,374.90 87.59,376.45 87.75,377.98 87.90,379.49 88.05,381.02 88.19,382.59 88.34,384.21 88.50,385.90 88.65,387.45 88.81,389.06 88.96,390.71 89.12,392.39 89.29,394.09 89.46,395.80 89.63,397.51 89.80,399.20 89.95,400.69 90.10,402.17 90.26,403.66 90.41,405.14 90.57,406.64 90.73,408.14 90.91,409.67 91.10,411.22 91.30,412.80 91.50,414.26 91.71,415.77 91.93,417.31 92.17,418.88 92.41,420.44 92.65,422.00 92.89,423.54 93.13,425.05 93.37,426.50 93.60,427.90 93.87,429.57 94.14,431.17 94.39,432.72 94.65,434.23 94.91,435.70 95.19,437.15 95.48,438.58 95.80,440.00 96.19,441.62 96.60,443.22 97.03,444.79 97.48,446.33 97.94,447.82 98.42,449.25 98.90,450.60 99.66,452.46 100.51,454.30 101.36,455.98 102.09,457.38 102.60,458.40" fill="none" stroke="#ff0000" stroke-width="1.3" stroke-linejoin="round" shape-rendering="auto"/>
<polyline points="56.50,533.40 57.36,533.40 58.39,533.40 59.56,533.40 60.87,533.40 62.30,533.40 63.84,533.40 65.46,533.39 67.17,533.39 68.94,533.39 70.75,533.39 72.60,533.39 74.47,533.39 76.34,533.39 78.20,533.39 80.04,533.39 81.83,533.40 83.58,533.41 85.25,533.42 86.85,533.43 88.34,533.44 89.73,533.46 90.98,533.48 92.10,533.50 94.78,533.58 96.91,533.68 98.59,533.80 99.96,533.92 101.10,534.06 102.15,534.21 103.21,534.35 104.40,534.50 106.33,534.73 108.06,534.98 109.64,535.24 111.17,535.51 112.70,535.80 114.60,536.20 116.43,536.64 118.22,537.09 120.00,537.50 121.77,537.85 123.52,538.17 125.26,538.51 127.00,538.90 128.75,539.37 130.50,539.88 132.25,540.43 134.00,541.00 135.75,541.59 137.50,542.21 139.25,542.84 141.00,543.50 142.40,544.03 143.80,544.58 145.20,545.14 146.60,545.71 148.00,546.30 149.40,546.92 150.80,547.56 152.20,548.21 153.60,548.86 155.00,549.50 156.40,550.12 157.80,550.73 159.20,551.34 160.60,551.96 162.00,552.60 163.40,553.26 164.80,553.94 166.20,554.63 167.60,555.35 169.00,556.10 170.40,556.91 171.80,557.76 173.20,558.64 174.60,559.49 176.00,560.30 177.40,561.04 178.80,561.75 180.20,562.43 181.60,563.11 183.00,563.80 184.40,564.51 185.80,565.23 187.20,565.95 188.60,566.64 190.00,567.30 191.40,567.89 192.80,568.44 194.20,568.96 195.60,569.51 197.00,570.10 198.40,570.77 199.80,571.50 201.20,572.24 202.60,572.95 204.00,573.60 205.75,574.30 207.50,574.92 209.25,575.51 211.00,576.10 212.75,576.72 214.50,577.34 216.25,577.94 218.00,578.50 219.75,579.01 221.50,579.48 223.25,579.93 225.00,580.40 226.68,580.89 228.33,581.39 230.05,581.89 232.00,582.40 233.45,582.75 234.98,583.10 236.59,583.46 238.27,583.81 240.01,584.16 241.80,584.50 243.21,584.75 244.69,585.01 246.23,585.27 247.79,585.52 249.35,585.76 250.87,585.99 252.33,586.21 253.70,586.40 255.36,586.62 256.89,586.80 258.34,586.96 259.77,587.10 261.23,587.24 262.80,587.40 264.14,587.54 265.41,587.68 266.69,587.82 268.04,587.96 269.54,588.11 271.27,588.25 273.30,588.40 274.43,588.48 275.49,588.57 276.52,588.67 277.55,588.77 278.62,588.87 279.78,588.96 281.06,589.06 282.51,589.15 284.16,589.24 286.05,589.32 288.23,589.39 290.73,589.45 293.60,589.50 294.66,589.51 295.81,589.53 297.05,589.54 298.35,589.55 299.73,589.55 301.17,589.56 302.67,589.57 304.23,589.57 305.84,589.58 307.49,589.58 309.18,589.58 310.91,589.58 312.67,589.58 314.46,589.58 316.27,589.58 318.09,589.58 319.92,589.58 321.76,589.57 323.60,589.57 325.44,589.57 327.26,589.56 329.07,589.56 330.87,589.55 332.64,589.55 334.38,589.55 336.08,589.54 337.75,589.54 339.37,589.53 340.95,589.53 342.47,589.52 343.93,589.52 345.32,589.51 346.65,589.51 347.91,589.51 349.08,589.51 350.18,589.50 351.18,589.50 352.09,589.50 352.90,589.50" fill="none" stroke="#00a0ff" stroke-width="1.3" stroke-linejoin="round" shape-rendering="auto"/>
<polyline points="56.50,533.40 57.45,533.40 58.69,533.39 60.16,533.38 61.82,533.36 63.62,533.35 65.51,533.34 67.44,533.33 69.36,533.32 71.22,533.32 72.98,533.32 74.57,533.34 75.96,533.36 77.10,533.40 80.00,533.66 81.18,534.04 82.30,534.50 83.86,535.00 85.34,535.58 86.90,536.30 88.16,536.91 89.47,537.57 90.79,538.38 92.10,539.40 93.14,540.43 94.20,541.61 95.24,542.90 96.25,544.25 97.20,545.60 98.10,546.96 98.96,548.36 99.78,549.80 100.56,551.28 101.30,552.80 101.98,554.36 102.61,555.96 103.21,557.59 103.80,559.27 104.40,561.00 104.92,562.49 105.43,564.02 105.95,565.58 106.47,567.16 106.98,568.74 107.50,570.30 108.03,571.84 108.57,573.36 109.11,574.89 109.64,576.43 110.14,577.99 110.60,579.60 110.96,581.03 111.30,582.51 111.62,584.02 111.92,585.54 112.19,587.04 112.46,588.50 112.70,589.90 112.97,591.76 113.17,593.54 113.36,595.27 113.58,596.98 113.90,598.70 114.26,600.13 114.69,601.54 115.16,602.94 115.64,604.36 116.13,605.81 116.60,607.30 117.04,608.86 117.48,610.49 117.91,612.14 118.36,613.80 118.82,615.43 119.30,617.00 119.82,618.53 120.36,620.04 120.92,621.52 121.49,622.96 122.05,624.36 122.60,625.70 123.23,627.24 123.83,628.72 124.44,630.13 125.08,631.46 125.80,632.70 126.79,634.11 127.86,635.39 129.00,636.54 130.20,637.60 131.48,638.54 132.84,639.36 134.23,640.10 135.60,640.80 137.42,641.71 139.24,642.54 141.00,643.20 142.52,643.63 143.98,643.90 145.80,644.10 147.34,644.20 149.19,644.28 151.08,644.33 152.75,644.37 153.90,644.40" fill="none" stroke="#00ff00" stroke-width="1.3" stroke-linejoin="round" shape-rendering="auto"/>
<polyline points="56.50,533.40 57.65,533.39 59.29,533.36 61.23,533.33 63.29,533.30 65.29,533.30 67.06,533.33 68.40,533.40 70.47,533.87 71.50,534.80 72.70,535.78 73.96,537.01 75.10,538.40 76.06,539.91 76.91,541.59 77.70,543.50 78.25,545.13 78.76,546.90 79.24,548.77 79.70,550.70 80.06,552.27 80.40,553.89 80.72,555.56 81.02,557.26 81.30,559.00 81.50,560.47 81.66,561.95 81.81,563.46 81.95,565.01 82.11,566.62 82.30,568.30 82.49,569.81 82.70,571.38 82.93,573.00 83.16,574.65 83.39,576.31 83.60,577.97 83.80,579.60 83.98,581.23 84.15,582.87 84.31,584.52 84.46,586.16 84.61,587.77 84.76,589.36 84.90,590.90 85.06,592.64 85.21,594.35 85.35,596.01 85.49,597.64 85.64,599.24 85.80,600.80 86.01,602.64 86.23,604.42 86.45,606.16 86.68,607.86 86.90,609.50 87.12,611.08 87.34,612.58 87.56,614.05 87.78,615.51 88.00,617.00 88.21,618.51 88.42,620.03 88.62,621.56 88.85,623.08 89.10,624.60 89.39,626.16 89.70,627.75 90.04,629.32 90.37,630.82 90.70,632.20 91.19,634.20 91.69,635.96 92.30,637.60 93.08,639.19 93.98,640.66 95.00,641.90 96.81,643.25 98.80,644.10 101.09,644.39 102.90,644.40" fill="none" stroke="#ff0000" stroke-width="1.3" stroke-linejoin="round" shape-rendering="auto"/>
<polyline points="474.00,478.50 733.50,478.50" fill="none" stroke="#00a0ff" stroke-width="1.3" stroke-linejoin="round" shape-rendering="auto"/>
<polyline points="453.90,478.50 454.87,478.49 456.14,478.48 457.66,478.47 459.37,478.46 461.21,478.45 463.13,478.43 465.07,478.41 466.96,478.39 468.76,478.35 470.41,478.31 471.84,478.26 473.00,478.20 475.69,477.86 476.83,477.41 478.10,476.90 479.59,476.48 481.17,476.02 482.79,475.53 484.40,475.00 485.99,474.42 487.59,473.79 489.20,473.15 490.80,472.50 492.46,471.81 494.16,471.07 495.78,470.40 497.20,469.90 499.26,469.49 501.00,469.50 502.74,469.74 504.80,470.30 506.22,470.76 507.84,471.33 509.55,471.94 511.20,472.50 512.78,473.00 514.35,473.47 515.92,473.93 517.50,474.40 519.10,474.90 520.70,475.41 522.30,475.90 523.90,476.30 525.55,476.60 527.23,476.82 528.82,477.01 530.20,477.20 532.39,477.61 533.80,477.90" fill="none" stroke="#00ff00" stroke-width="1.3" stroke-linejoin="round" shape-rendering="auto"/>
<polyline points="436.50,478.50 437.45,478.49 438.72,478.49 440.24,478.49 441.94,478.49 443.77,478.49 445.64,478.48 447.49,478.47 449.24,478.45 450.85,478.41 452.22,478.36 453.30,478.30 455.76,477.82 456.50,476.90 457.54,475.91 458.56,474.65 459.60,473.10 460.39,471.70 461.19,470.10 462.00,468.40 462.80,466.70 463.44,465.27 464.09,463.75 464.74,462.23 465.38,460.85 466.00,459.70 467.47,457.67 468.90,456.80 470.28,457.37 471.70,459.10 472.47,460.43 473.27,462.09 474.09,463.85 474.90,465.50 475.72,467.06 476.54,468.61 477.35,470.04 478.10,471.20 479.41,472.56 480.60,473.40 481.91,474.34 482.90,475.00" fill="none" stroke="#ff0000" stroke-width="1.3" stroke-linejoin="round" shape-rendering="auto"/>
<polyline points="466.70,684.50 525.00,684.50 525.20,683.50 581.50,683.50 581.70,684.50 733.50,684.50" fill="none" stroke="#00a0ff" stroke-width="1.3" stroke-linejoin="round" shape-rendering="auto"/>
<polyline points="450.80,684.50 451.79,684.49 453.11,684.49 454.70,684.49 456.47,684.49 458.35,684.49 460.26,684.47 462.13,684.44 463.87,684.39 465.42,684.31 466.70,684.20 468.94,683.81 470.42,683.30 471.64,682.69 473.10,682.00 474.54,681.37 476.05,680.66 477.60,679.91 479.16,679.18 480.70,678.50 482.24,677.85 483.80,677.20 485.35,676.58 486.86,676.07 488.30,675.70 489.99,675.45 491.58,675.39 493.14,675.49 494.70,675.70 496.25,676.04 497.77,676.51 499.33,677.11 501.00,677.80 502.45,678.47 503.98,679.26 505.56,680.08 507.14,680.89 508.70,681.60 510.06,682.23 511.26,682.84 512.53,683.38 514.13,683.85 516.30,684.20 517.60,684.31 519.16,684.40 520.90,684.46 522.77,684.49 524.70,684.51 526.64,684.51 528.51,684.51 530.25,684.50 531.81,684.49 533.11,684.49 534.10,684.50" fill="none" stroke="#00ff00" stroke-width="1.3" stroke-linejoin="round" shape-rendering="auto"/>
<polyline points="436.50,684.50 437.48,684.51 438.84,684.52 440.47,684.54 442.26,684.55 444.13,684.57 445.96,684.57 447.65,684.57 449.09,684.54 450.20,684.50 452.11,684.16 452.70,683.50 454.26,682.59 455.90,681.00 456.72,679.67 457.54,678.04 458.35,676.28 459.10,674.60 459.77,672.98 460.39,671.35 460.98,669.77 461.60,668.30 462.49,666.41 463.38,664.69 464.20,663.50 465.16,662.90 466.10,663.50 466.89,664.64 467.74,666.31 468.60,668.30 469.12,669.68 469.64,671.26 470.16,672.91 470.68,674.50 471.20,675.90 472.01,677.88 472.82,679.59 473.70,681.00 475.10,682.51 476.90,683.50 478.83,683.98 481.03,684.30 482.60,684.50" fill="none" stroke="#ff0000" stroke-width="1.3" stroke-linejoin="round" shape-rendering="auto"/>
<rect x="628" y="143" width="10" height="1" fill="#ff0000" />
<rect x="628" y="157" width="10" height="1" fill="#00ff00" />
<rect x="628" y="171" width="10" height="1" fill="#00a0ff" />
<filter id="thr" x="0" y="0" width="786" height="729" filterUnits="userSpaceOnUse" color-interpolation-filters="sRGB"><feComponentTransfer><feFuncA type="discrete" tableValues="0 0 0 0 0 0 0 0 0 1 1 1 1 1 1 1 1 1 1 1"/></feComponentTransfer></filter>
<g>
<text x="18" y="45" font-size="12" fill="#000" text-anchor="start" textLength="23" lengthAdjust="spacingAndGlyphs" >Main</text>
<text x="59" y="45" font-size="12" fill="#000" text-anchor="start" textLength="62" lengthAdjust="spacingAndGlyphs" >Time Adjust</text>
<text x="133" y="45" font-size="12" fill="#000" text-anchor="start" textLength="62" lengthAdjust="spacingAndGlyphs" >Point Select</text>
<text x="207" y="45" font-size="12" fill="#000" text-anchor="start" textLength="65" lengthAdjust="spacingAndGlyphs" >Plane Adjust</text>
<text x="284" y="45" font-size="12" fill="#000" text-anchor="start" textLength="41" lengthAdjust="spacingAndGlyphs" >Velocity</text>
<text x="337" y="45" font-size="12" fill="#000" text-anchor="start" textLength="25.5" lengthAdjust="spacingAndGlyphs" >Orbit</text>
<text x="380" y="45" font-size="12" fill="#000" text-anchor="start" textLength="27" lengthAdjust="spacingAndGlyphs" >Mass</text>
<text x="422" y="45" font-size="12" fill="#000" text-anchor="start" textLength="57" lengthAdjust="spacingAndGlyphs" >Dark Flight</text>
<text x="491" y="45" font-size="12" fill="#000" text-anchor="start" textLength="53" lengthAdjust="spacingAndGlyphs" >Simulation</text>
<text x="555.5" y="43" font-size="12" fill="#000" text-anchor="start" textLength="25.5" lengthAdjust="spacingAndGlyphs" >Sim2</text>
<text x="29.5" y="63" font-size="12" fill="#000" text-anchor="start" textLength="14" lengthAdjust="spacingAndGlyphs" >Me</text>
<text x="88" y="63" font-size="12" fill="#000" text-anchor="end" textLength="25" lengthAdjust="spacingAndGlyphs" >1.000</text>
<text x="29" y="85" font-size="12" fill="#000" text-anchor="start" textLength="14" lengthAdjust="spacingAndGlyphs" >Cd</text>
<text x="88" y="85" font-size="12" fill="#000" text-anchor="end" textLength="20" lengthAdjust="spacingAndGlyphs" >1.00</text>
<text x="129" y="63" font-size="12" fill="#000" text-anchor="start" textLength="14" lengthAdjust="spacingAndGlyphs" >Ve</text>
<text x="188" y="63" font-size="12" fill="#000" text-anchor="end" textLength="20.5" lengthAdjust="spacingAndGlyphs" >15.0</text>
<text x="128.5" y="85" font-size="12" fill="#000" text-anchor="start" textLength="10" lengthAdjust="spacingAndGlyphs" >ht</text>
<text x="188" y="85" font-size="12" fill="#000" text-anchor="end" textLength="20.5" lengthAdjust="spacingAndGlyphs" >0.20</text>
<text x="229.5" y="63" font-size="12" fill="#000" text-anchor="start" textLength="13.5" lengthAdjust="spacingAndGlyphs" >He</text>
<text x="288" y="63" font-size="12" fill="#000" text-anchor="end" textLength="26" lengthAdjust="spacingAndGlyphs" >100.0</text>
<text x="228.5" y="85" font-size="12" fill="#000" text-anchor="start" textLength="8.5" lengthAdjust="spacingAndGlyphs" >Q</text>
<text x="288" y="85" font-size="12" fill="#000" text-anchor="end" textLength="23.5" lengthAdjust="spacingAndGlyphs" >4000</text>
<text x="330" y="63" font-size="12" fill="#000" text-anchor="start" textLength="18" lengthAdjust="spacingAndGlyphs" >Eve</text>
<text x="388" y="63" font-size="12" fill="#000" text-anchor="end" textLength="21" lengthAdjust="spacingAndGlyphs" >5.00</text>
<text x="428.5" y="63" font-size="12" fill="#000" text-anchor="start" textLength="38" lengthAdjust="spacingAndGlyphs" >density</text>
<text x="508" y="63" font-size="12" fill="#000" text-anchor="end" textLength="23.5" lengthAdjust="spacingAndGlyphs" >4000</text>
<text x="448.5" y="85" font-size="12" fill="#000" text-anchor="start" textLength="20" lengthAdjust="spacingAndGlyphs" >href</text>
<text x="508" y="85" font-size="12" fill="#000" text-anchor="end" textLength="12.5" lengthAdjust="spacingAndGlyphs" >27</text>
<text x="53" y="277" font-size="12" fill="#ffffff" text-anchor="end" textLength="13" lengthAdjust="spacingAndGlyphs" >0.0</text>
<text x="53" y="261" font-size="12" fill="#ffffff" text-anchor="end" textLength="19" lengthAdjust="spacingAndGlyphs" >10.0</text>
<text x="53" y="246" font-size="12" fill="#ffffff" text-anchor="end" textLength="19" lengthAdjust="spacingAndGlyphs" >20.0</text>
<text x="53" y="230" font-size="12" fill="#ffffff" text-anchor="end" textLength="19" lengthAdjust="spacingAndGlyphs" >30.0</text>
<text x="53" y="215" font-size="12" fill="#ffffff" text-anchor="end" textLength="19" lengthAdjust="spacingAndGlyphs" >40.0</text>
<text x="53" y="199" font-size="12" fill="#ffffff" text-anchor="end" textLength="19" lengthAdjust="spacingAndGlyphs" >50.0</text>
<text x="53" y="184" font-size="12" fill="#ffffff" text-anchor="end" textLength="19" lengthAdjust="spacingAndGlyphs" >60.0</text>
<text x="53" y="168" font-size="12" fill="#ffffff" text-anchor="end" textLength="19" lengthAdjust="spacingAndGlyphs" >70.0</text>
<text x="53" y="153" font-size="12" fill="#ffffff" text-anchor="end" textLength="19" lengthAdjust="spacingAndGlyphs" >80.0</text>
<text x="53" y="137" font-size="12" fill="#ffffff" text-anchor="end" textLength="19" lengthAdjust="spacingAndGlyphs" >90.0</text>
<text x="53" y="122" font-size="12" fill="#ffffff" text-anchor="end" textLength="25" lengthAdjust="spacingAndGlyphs" >100.0</text>
<text x="53.5" y="288" font-size="12" fill="#ffffff" text-anchor="middle" textLength="13.5" lengthAdjust="spacingAndGlyphs" >0.0</text>
<text x="87.6" y="288" font-size="12" fill="#ffffff" text-anchor="middle" textLength="19.5" lengthAdjust="spacingAndGlyphs" >13.0</text>
<text x="119.6" y="288" font-size="12" fill="#ffffff" text-anchor="middle" textLength="19.5" lengthAdjust="spacingAndGlyphs" >26.0</text>
<text x="150.6" y="288" font-size="12" fill="#ffffff" text-anchor="middle" textLength="19.5" lengthAdjust="spacingAndGlyphs" >39.0</text>
<text x="181.6" y="288" font-size="12" fill="#ffffff" text-anchor="middle" textLength="19.5" lengthAdjust="spacingAndGlyphs" >52.0</text>
<text x="213.6" y="288" font-size="12" fill="#ffffff" text-anchor="middle" textLength="19.5" lengthAdjust="spacingAndGlyphs" >65.0</text>
<text x="244.6" y="288" font-size="12" fill="#ffffff" text-anchor="middle" textLength="19.5" lengthAdjust="spacingAndGlyphs" >78.0</text>
<text x="275.6" y="288" font-size="12" fill="#ffffff" text-anchor="middle" textLength="19.5" lengthAdjust="spacingAndGlyphs" >91.0</text>
<text x="310" y="288" font-size="12" fill="#ffffff" text-anchor="middle" textLength="26" lengthAdjust="spacingAndGlyphs" >104.0</text>
<text x="341" y="288" font-size="12" fill="#ffffff" text-anchor="middle" textLength="26" lengthAdjust="spacingAndGlyphs" >117.0</text>
<text x="372" y="288" font-size="12" fill="#ffffff" text-anchor="middle" textLength="26" lengthAdjust="spacingAndGlyphs" >130.0</text>
<text x="294" y="299" font-size="12" fill="#ffffff" text-anchor="start" textLength="49" lengthAdjust="spacingAndGlyphs" >Time(sec)</text>
<text x="17.5" y="111" font-size="12" fill="#ffffff" text-anchor="start" textLength="29.5" lengthAdjust="spacingAndGlyphs" >h(km)</text>
<text x="53" y="483.0" font-size="12" fill="#ffffff" text-anchor="end" textLength="13" lengthAdjust="spacingAndGlyphs" >0.0</text>
<text x="53" y="462" font-size="12" fill="#ffffff" text-anchor="end" textLength="13" lengthAdjust="spacingAndGlyphs" >2.0</text>
<text x="53" y="442" font-size="12" fill="#ffffff" text-anchor="end" textLength="13" lengthAdjust="spacingAndGlyphs" >4.0</text>
<text x="53" y="422" font-size="12" fill="#ffffff" text-anchor="end" textLength="13" lengthAdjust="spacingAndGlyphs" >6.0</text>
<text x="53" y="402" font-size="12" fill="#ffffff" text-anchor="end" textLength="13" lengthAdjust="spacingAndGlyphs" >8.0</text>
<text x="53" y="382" font-size="12" fill="#ffffff" text-anchor="end" textLength="19" lengthAdjust="spacingAndGlyphs" >10.0</text>
<text x="53" y="361" font-size="12" fill="#ffffff" text-anchor="end" textLength="19" lengthAdjust="spacingAndGlyphs" >12.0</text>
<text x="53" y="341" font-size="12" fill="#ffffff" text-anchor="end" textLength="19" lengthAdjust="spacingAndGlyphs" >14.0</text>
<text x="53" y="321" font-size="12" fill="#ffffff" text-anchor="end" textLength="19" lengthAdjust="spacingAndGlyphs" >16.0</text>
<text x="53.5" y="494" font-size="12" fill="#ffffff" text-anchor="middle" textLength="13.5" lengthAdjust="spacingAndGlyphs" >0.0</text>
<text x="87.6" y="494" font-size="12" fill="#ffffff" text-anchor="middle" textLength="19.5" lengthAdjust="spacingAndGlyphs" >13.0</text>
<text x="119.6" y="494" font-size="12" fill="#ffffff" text-anchor="middle" textLength="19.5" lengthAdjust="spacingAndGlyphs" >26.0</text>
<text x="150.6" y="494" font-size="12" fill="#ffffff" text-anchor="middle" textLength="19.5" lengthAdjust="spacingAndGlyphs" >39.0</text>
<text x="181.6" y="494" font-size="12" fill="#ffffff" text-anchor="middle" textLength="19.5" lengthAdjust="spacingAndGlyphs" >52.0</text>
<text x="213.6" y="494" font-size="12" fill="#ffffff" text-anchor="middle" textLength="19.5" lengthAdjust="spacingAndGlyphs" >65.0</text>
<text x="244.6" y="494" font-size="12" fill="#ffffff" text-anchor="middle" textLength="19.5" lengthAdjust="spacingAndGlyphs" >78.0</text>
<text x="275.6" y="494" font-size="12" fill="#ffffff" text-anchor="middle" textLength="19.5" lengthAdjust="spacingAndGlyphs" >91.0</text>
<text x="310" y="494" font-size="12" fill="#ffffff" text-anchor="middle" textLength="26" lengthAdjust="spacingAndGlyphs" >104.0</text>
<text x="341" y="494" font-size="12" fill="#ffffff" text-anchor="middle" textLength="26" lengthAdjust="spacingAndGlyphs" >117.0</text>
<text x="372" y="494" font-size="12" fill="#ffffff" text-anchor="middle" textLength="26" lengthAdjust="spacingAndGlyphs" >130.0</text>
<text x="294" y="505" font-size="12" fill="#ffffff" text-anchor="start" textLength="49" lengthAdjust="spacingAndGlyphs" >Time(sec)</text>
<text x="17.5" y="305" font-size="12" fill="#ffffff" text-anchor="start" textLength="41.5" lengthAdjust="spacingAndGlyphs" >v(km/s)</text>
<text x="433" y="483.0" font-size="12" fill="#ffffff" text-anchor="end" textLength="13" lengthAdjust="spacingAndGlyphs" >0.0</text>
<text x="433" y="462" font-size="12" fill="#ffffff" text-anchor="end" textLength="13" lengthAdjust="spacingAndGlyphs" >2.0</text>
<text x="433" y="442" font-size="12" fill="#ffffff" text-anchor="end" textLength="13" lengthAdjust="spacingAndGlyphs" >4.0</text>
<text x="433" y="422" font-size="12" fill="#ffffff" text-anchor="end" textLength="13" lengthAdjust="spacingAndGlyphs" >6.0</text>
<text x="433" y="402" font-size="12" fill="#ffffff" text-anchor="end" textLength="13" lengthAdjust="spacingAndGlyphs" >8.0</text>
<text x="433" y="382" font-size="12" fill="#ffffff" text-anchor="end" textLength="19" lengthAdjust="spacingAndGlyphs" >10.0</text>
<text x="433" y="361" font-size="12" fill="#ffffff" text-anchor="end" textLength="19" lengthAdjust="spacingAndGlyphs" >12.0</text>
<text x="433" y="341" font-size="12" fill="#ffffff" text-anchor="end" textLength="19" lengthAdjust="spacingAndGlyphs" >14.0</text>
<text x="433" y="321" font-size="12" fill="#ffffff" text-anchor="end" textLength="19" lengthAdjust="spacingAndGlyphs" >16.0</text>
<text x="433.5" y="494" font-size="12" fill="#ffffff" text-anchor="middle" textLength="13.5" lengthAdjust="spacingAndGlyphs" >0.0</text>
<text x="467.6" y="494" font-size="12" fill="#ffffff" text-anchor="middle" textLength="19.5" lengthAdjust="spacingAndGlyphs" >13.0</text>
<text x="499.6" y="494" font-size="12" fill="#ffffff" text-anchor="middle" textLength="19.5" lengthAdjust="spacingAndGlyphs" >26.0</text>
<text x="530.6" y="494" font-size="12" fill="#ffffff" text-anchor="middle" textLength="19.5" lengthAdjust="spacingAndGlyphs" >39.0</text>
<text x="561.6" y="494" font-size="12" fill="#ffffff" text-anchor="middle" textLength="19.5" lengthAdjust="spacingAndGlyphs" >52.0</text>
<text x="593.6" y="494" font-size="12" fill="#ffffff" text-anchor="middle" textLength="19.5" lengthAdjust="spacingAndGlyphs" >65.0</text>
<text x="624.6" y="494" font-size="12" fill="#ffffff" text-anchor="middle" textLength="19.5" lengthAdjust="spacingAndGlyphs" >78.0</text>
<text x="655.6" y="494" font-size="12" fill="#ffffff" text-anchor="middle" textLength="19.5" lengthAdjust="spacingAndGlyphs" >91.0</text>
<text x="690" y="494" font-size="12" fill="#ffffff" text-anchor="middle" textLength="26" lengthAdjust="spacingAndGlyphs" >104.0</text>
<text x="721" y="494" font-size="12" fill="#ffffff" text-anchor="middle" textLength="26" lengthAdjust="spacingAndGlyphs" >117.0</text>
<text x="752" y="494" font-size="12" fill="#ffffff" text-anchor="middle" textLength="26" lengthAdjust="spacingAndGlyphs" >130.0</text>
<text x="674" y="505" font-size="12" fill="#ffffff" text-anchor="start" textLength="49" lengthAdjust="spacingAndGlyphs" >Time(sec)</text>
<text x="397.5" y="305" font-size="12" fill="#ffffff" text-anchor="start" textLength="64" lengthAdjust="spacingAndGlyphs" >-dv(km/s^2)</text>
<text x="53" y="689" font-size="12" fill="#ffffff" text-anchor="end" textLength="25" lengthAdjust="spacingAndGlyphs" >0.000</text>
<text x="53" y="672" font-size="12" fill="#ffffff" text-anchor="end" textLength="25" lengthAdjust="spacingAndGlyphs" >0.107</text>
<text x="53" y="656" font-size="12" fill="#ffffff" text-anchor="end" textLength="25" lengthAdjust="spacingAndGlyphs" >0.214</text>
<text x="53" y="640" font-size="12" fill="#ffffff" text-anchor="end" textLength="25" lengthAdjust="spacingAndGlyphs" >0.320</text>
<text x="53" y="623" font-size="12" fill="#ffffff" text-anchor="end" textLength="25" lengthAdjust="spacingAndGlyphs" >0.427</text>
<text x="53" y="607" font-size="12" fill="#ffffff" text-anchor="end" textLength="25" lengthAdjust="spacingAndGlyphs" >0.534</text>
<text x="53" y="591" font-size="12" fill="#ffffff" text-anchor="end" textLength="25" lengthAdjust="spacingAndGlyphs" >0.641</text>
<text x="53" y="575" font-size="12" fill="#ffffff" text-anchor="end" textLength="25" lengthAdjust="spacingAndGlyphs" >0.748</text>
<text x="53" y="558" font-size="12" fill="#ffffff" text-anchor="end" textLength="25" lengthAdjust="spacingAndGlyphs" >0.854</text>
<text x="53" y="542" font-size="12" fill="#ffffff" text-anchor="end" textLength="25" lengthAdjust="spacingAndGlyphs" >0.961</text>
<text x="53" y="526" font-size="12" fill="#ffffff" text-anchor="end" textLength="25" lengthAdjust="spacingAndGlyphs" >1.068</text>
<text x="53.5" y="700" font-size="12" fill="#ffffff" text-anchor="middle" textLength="13.5" lengthAdjust="spacingAndGlyphs" >0.0</text>
<text x="87.6" y="700" font-size="12" fill="#ffffff" text-anchor="middle" textLength="19.5" lengthAdjust="spacingAndGlyphs" >13.0</text>
<text x="119.6" y="700" font-size="12" fill="#ffffff" text-anchor="middle" textLength="19.5" lengthAdjust="spacingAndGlyphs" >26.0</text>
<text x="150.6" y="700" font-size="12" fill="#ffffff" text-anchor="middle" textLength="19.5" lengthAdjust="spacingAndGlyphs" >39.0</text>
<text x="181.6" y="700" font-size="12" fill="#ffffff" text-anchor="middle" textLength="19.5" lengthAdjust="spacingAndGlyphs" >52.0</text>
<text x="213.6" y="700" font-size="12" fill="#ffffff" text-anchor="middle" textLength="19.5" lengthAdjust="spacingAndGlyphs" >65.0</text>
<text x="244.6" y="700" font-size="12" fill="#ffffff" text-anchor="middle" textLength="19.5" lengthAdjust="spacingAndGlyphs" >78.0</text>
<text x="275.6" y="700" font-size="12" fill="#ffffff" text-anchor="middle" textLength="19.5" lengthAdjust="spacingAndGlyphs" >91.0</text>
<text x="310" y="700" font-size="12" fill="#ffffff" text-anchor="middle" textLength="26" lengthAdjust="spacingAndGlyphs" >104.0</text>
<text x="341" y="700" font-size="12" fill="#ffffff" text-anchor="middle" textLength="26" lengthAdjust="spacingAndGlyphs" >117.0</text>
<text x="372" y="700" font-size="12" fill="#ffffff" text-anchor="middle" textLength="26" lengthAdjust="spacingAndGlyphs" >130.0</text>
<text x="294" y="711" font-size="12" fill="#ffffff" text-anchor="start" textLength="49" lengthAdjust="spacingAndGlyphs" >Time(sec)</text>
<text x="18" y="511" font-size="12" fill="#ffffff" text-anchor="start" textLength="29" lengthAdjust="spacingAndGlyphs" >m(kg)</text>
<text x="433" y="689" font-size="12" fill="#ffffff" text-anchor="end" textLength="25" lengthAdjust="spacingAndGlyphs" >0.000</text>
<text x="433" y="672" font-size="12" fill="#ffffff" text-anchor="end" textLength="25" lengthAdjust="spacingAndGlyphs" >0.107</text>
<text x="433" y="656" font-size="12" fill="#ffffff" text-anchor="end" textLength="25" lengthAdjust="spacingAndGlyphs" >0.214</text>
<text x="433" y="640" font-size="12" fill="#ffffff" text-anchor="end" textLength="25" lengthAdjust="spacingAndGlyphs" >0.320</text>
<text x="433" y="623" font-size="12" fill="#ffffff" text-anchor="end" textLength="25" lengthAdjust="spacingAndGlyphs" >0.427</text>
<text x="433" y="607" font-size="12" fill="#ffffff" text-anchor="end" textLength="25" lengthAdjust="spacingAndGlyphs" >0.534</text>
<text x="433" y="591" font-size="12" fill="#ffffff" text-anchor="end" textLength="25" lengthAdjust="spacingAndGlyphs" >0.641</text>
<text x="433" y="575" font-size="12" fill="#ffffff" text-anchor="end" textLength="25" lengthAdjust="spacingAndGlyphs" >0.748</text>
<text x="433" y="558" font-size="12" fill="#ffffff" text-anchor="end" textLength="25" lengthAdjust="spacingAndGlyphs" >0.854</text>
<text x="433" y="542" font-size="12" fill="#ffffff" text-anchor="end" textLength="25" lengthAdjust="spacingAndGlyphs" >0.961</text>
<text x="433" y="526" font-size="12" fill="#ffffff" text-anchor="end" textLength="25" lengthAdjust="spacingAndGlyphs" >1.068</text>
<text x="433.5" y="700" font-size="12" fill="#ffffff" text-anchor="middle" textLength="13.5" lengthAdjust="spacingAndGlyphs" >0.0</text>
<text x="467.6" y="700" font-size="12" fill="#ffffff" text-anchor="middle" textLength="19.5" lengthAdjust="spacingAndGlyphs" >13.0</text>
<text x="499.6" y="700" font-size="12" fill="#ffffff" text-anchor="middle" textLength="19.5" lengthAdjust="spacingAndGlyphs" >26.0</text>
<text x="530.6" y="700" font-size="12" fill="#ffffff" text-anchor="middle" textLength="19.5" lengthAdjust="spacingAndGlyphs" >39.0</text>
<text x="561.6" y="700" font-size="12" fill="#ffffff" text-anchor="middle" textLength="19.5" lengthAdjust="spacingAndGlyphs" >52.0</text>
<text x="593.6" y="700" font-size="12" fill="#ffffff" text-anchor="middle" textLength="19.5" lengthAdjust="spacingAndGlyphs" >65.0</text>
<text x="624.6" y="700" font-size="12" fill="#ffffff" text-anchor="middle" textLength="19.5" lengthAdjust="spacingAndGlyphs" >78.0</text>
<text x="655.6" y="700" font-size="12" fill="#ffffff" text-anchor="middle" textLength="19.5" lengthAdjust="spacingAndGlyphs" >91.0</text>
<text x="690" y="700" font-size="12" fill="#ffffff" text-anchor="middle" textLength="26" lengthAdjust="spacingAndGlyphs" >104.0</text>
<text x="721" y="700" font-size="12" fill="#ffffff" text-anchor="middle" textLength="26" lengthAdjust="spacingAndGlyphs" >117.0</text>
<text x="752" y="700" font-size="12" fill="#ffffff" text-anchor="middle" textLength="26" lengthAdjust="spacingAndGlyphs" >130.0</text>
<text x="674" y="711" font-size="12" fill="#ffffff" text-anchor="start" textLength="49" lengthAdjust="spacingAndGlyphs" >Time(sec)</text>
<text x="397.5" y="511" font-size="12" fill="#ffffff" text-anchor="start" textLength="53" lengthAdjust="spacingAndGlyphs" >-dm(kg/s)</text>
<text x="452.5" y="154" font-size="12" fill="#ffffff" text-anchor="start" textLength="66" lengthAdjust="spacingAndGlyphs" >Me= 1.000 kg</text>
<text x="452.5" y="168" font-size="12" fill="#ffffff" text-anchor="start" textLength="74" lengthAdjust="spacingAndGlyphs" >Ve= 15.0 km/s</text>
<text x="452.5" y="182" font-size="12" fill="#ffffff" text-anchor="start" textLength="68" lengthAdjust="spacingAndGlyphs" >He= 100.0 km</text>
<text x="452.5" y="196" font-size="12" fill="#ffffff" text-anchor="start" textLength="60" lengthAdjust="spacingAndGlyphs" >EA= 5.0 deg</text>
<text x="452.5" y="210" font-size="12" fill="#ffffff" text-anchor="start" textLength="89" lengthAdjust="spacingAndGlyphs" >Ds= 4000 kg/m^3</text>
<text x="452.5" y="224" font-size="12" fill="#ffffff" text-anchor="start" textLength="43" lengthAdjust="spacingAndGlyphs" >Cd= 1.00</text>
<text x="452.5" y="238" font-size="12" fill="#ffffff" text-anchor="start" textLength="39" lengthAdjust="spacingAndGlyphs" >ht= 0.20</text>
<text x="452.5" y="252" font-size="12" fill="#ffffff" text-anchor="start" textLength="76.5" lengthAdjust="spacingAndGlyphs" >Q = 4000 cal/g</text>
<text x="644.5" y="147" font-size="12" fill="#ff0000" text-anchor="start" textLength="62" lengthAdjust="spacingAndGlyphs" >EA=20.0 deg</text>
<text x="644.5" y="161" font-size="12" fill="#00ff00" text-anchor="start" textLength="62" lengthAdjust="spacingAndGlyphs" >EA=10.0 deg</text>
<text x="644.5" y="175" font-size="12" fill="#00a0ff" text-anchor="start" textLength="55.5" lengthAdjust="spacingAndGlyphs" >EA=5.0 deg</text>
</g>
</svg>
</body></html>
